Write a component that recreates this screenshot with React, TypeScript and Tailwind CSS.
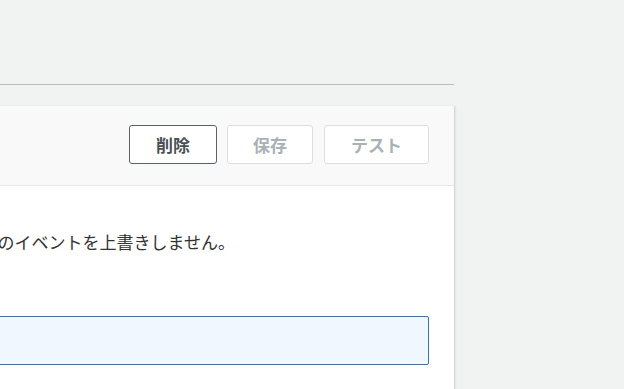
export default function App() {
  return (
    <div className="h-[389px] w-[624px] overflow-hidden bg-[#f1f2f2] font-['Noto_Sans_CJK_JP','Noto_Sans',sans-serif]">
      <div className="h-[85px] w-[454px] border-b border-[#b7bcbf]" />
      <div className="mt-[21px] ml-[-316px] w-[771px] border-r border-[#d3d5d6] bg-white shadow-[1px_0_2px_rgba(0,0,0,0.06)]">
        <div className="flex h-[80px] items-start justify-end gap-[10px] border-b border-[#e6e7e7] bg-[#f9f9f9] pt-[19px] pr-[25px]">
          <button className="h-[39px] w-[88px] rounded-[3px] border border-[#5c6168] bg-white text-[17px] font-bold text-[#4a4f55]">
            削除
          </button>
          <button
            disabled
            className="h-[39px] w-[86px] rounded-[3px] border border-[#dcdfe0] bg-white text-[17px] font-bold text-[#aab1b5]"
          >
            保存
          </button>
          <button
            disabled
            className="ml-px h-[39px] w-[105px] rounded-[3px] border border-[#dcdfe0] bg-white text-[17px] font-bold text-[#aab1b5]"
          >
            テスト
          </button>
        </div>
        <div className="px-[25px] pt-[44px] pb-[40px]">
          <p className="whitespace-nowrap text-[17px] leading-[24px] text-[#333]">
            このオプションを有効にすると、既存のイベントを上書きしません。
          </p>
          <div className="mt-[62px] h-[49px] rounded-[2px] border border-[#2f74c2] bg-[#f0f7fe]" />
        </div>
      </div>
    </div>
  )
}
